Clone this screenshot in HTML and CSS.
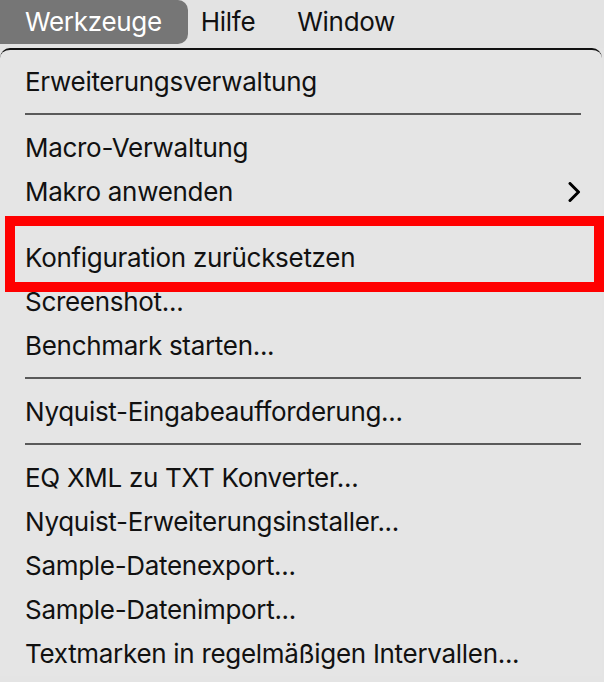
FILE: index.html
```html
<!DOCTYPE html>
<html lang="de">
<head>
    <meta charset="UTF-8">
    <meta name="viewport" content="width=device-width, initial-scale=1.0">
    <title>Werkzeuge</title>
    <link rel="stylesheet" href="styles.css">
</head>
<body>
    <div class="menubar">
        <div class="menubar-item active">Werkzeuge</div>
        <div class="menubar-item">Hilfe</div>
        <div class="menubar-item">Window</div>
    </div>

    <div class="menu">
        <div class="menu-item">Erweiterungsverwaltung</div>
        <div class="separator"></div>
        <div class="menu-item">Macro-Verwaltung</div>
        <div class="menu-item has-sub">
            <span>Makro anwenden</span>
            <svg class="chevron" width="14" height="20" viewBox="0 0 14 20">
                <polyline points="2,1.5 10.5,10 2,18.5" fill="none" stroke="#000" stroke-width="3" stroke-linecap="round" stroke-linejoin="round"/>
            </svg>
        </div>
        <div class="menu-item spaced">Konfiguration zurücksetzen</div>
        <div class="menu-item">Screenshot...</div>
        <div class="menu-item">Benchmark starten...</div>
        <div class="separator"></div>
        <div class="menu-item">Nyquist-Eingabeaufforderung...</div>
        <div class="separator"></div>
        <div class="menu-item">EQ XML zu TXT Konverter...</div>
        <div class="menu-item">Nyquist-Erweiterungsinstaller...</div>
        <div class="menu-item">Sample-Datenexport...</div>
        <div class="menu-item">Sample-Datenimport...</div>
        <div class="menu-item">Textmarken in regelmäßigen Intervallen...</div>
    </div>

    <!-- red annotation frame drawn over the menu -->
    <div class="mark-box"></div>
</body>
</html>
```

FILE: styles.css
```css
html, body {
    margin: 0;
    padding: 0;
    width: 604px;
    height: 682px;
    overflow: hidden;
    background-color: #e4e4e4;
    font-family: Inter, "Liberation Sans", sans-serif;
    letter-spacing: -0.3px;
    color: #111;
}
body {
    position: relative;
}
.menubar {
    display: flex;
    height: 48px;
    background-color: #e3e3e3;
    font-size: 26px;
}
.menubar-item {
    height: 44px;
    line-height: 44px;
    padding: 0 21px;
}
.menubar-item.active {
    background-color: #767676;
    color: #fff;
    padding: 0 26px 0 25px;
    border-radius: 0 10px 10px 0;
    margin-right: -8px;
}
.menu {
    border-top: 2px solid #111;
    border-radius: 10px 10px 0 0;
    margin-right: 2px;
    background-color: #e5e5e5;
    padding-top: 10px;
    font-size: 26px;
}
.menu-item {
    display: flex;
    align-items: center;
    justify-content: space-between;
    height: 44px;
    line-height: 44px;
    padding: 0 20px 0 25px;
}
.menu-item.spaced {
    margin-top: 22px;
}
.chevron {
    display: block;
}
.separator {
    height: 2px;
    background-color: #5a5a5a;
    margin: 9px 21px 11px 25px;
}
.mark-box {
    position: absolute;
    left: 5px;
    top: 216px;
    width: 599px;
    height: 76px;
    box-sizing: border-box;
    border: 10px solid #ff0000;
}
```
